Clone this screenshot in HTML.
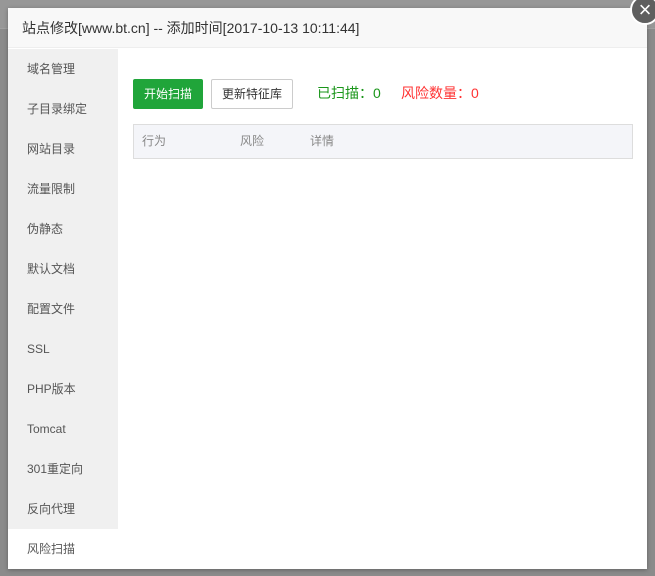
<!DOCTYPE html>
<html><head><meta charset="utf-8"><style>
*{margin:0;padding:0;box-sizing:border-box}
body{width:655px;height:576px;overflow:hidden;background:#8b8b8b;font-family:"Liberation Sans","Noto Sans CJK SC",sans-serif;position:relative}
.topbg{position:absolute;left:0;top:0;width:655px;height:29px;background:#979797;border-bottom:1px solid #a0a0a0}
.dlg{position:absolute;left:8px;top:8px;width:639px;height:561px;background:#fff;box-shadow:0 1px 4px rgba(0,0,0,.3)}
.hd{height:40px;background:#f8f8f8;border-bottom:1px solid #eee;font-size:14px;color:#333;line-height:40px;padding-left:14px}
.side{position:absolute;left:0;top:41px;width:110px;height:480px;background:#f0f0f0}
.side div,.act{height:40px;line-height:40px;padding-left:19px;font-size:12px;color:#555}
.act{position:absolute;left:0;top:521px;width:110px;background:#fff}
.main{position:absolute;left:125px;top:71px}
.b1{position:absolute;left:0;top:0;width:70px;height:30px;background:#20a53a;color:#fff;border-radius:2px;font-size:12px;line-height:30px;text-align:center}
.b2{position:absolute;left:78px;top:0;width:82px;height:30px;border:1px solid #ccc;border-radius:2px;color:#333;font-size:12px;line-height:28px;text-align:center}
.g{position:absolute;left:184px;top:0;line-height:28px;font-size:14px;color:#1a961a;white-space:nowrap}
.r{position:absolute;left:268px;top:0;line-height:28px;font-size:14px;color:#f33;white-space:nowrap}
.th{position:absolute;left:0;top:45px;width:500px;height:35px;background:#f4f5f9;border:1px solid #ddd;font-size:12px;color:#888;line-height:33px}
.th span{position:absolute;top:0}
.close{position:absolute;left:630px;top:-5px;width:30px;height:30px;border-radius:50%;background:#5f5f5f;border:2px solid #fff;color:#fff;text-align:center;line-height:25px;font-size:22px}
</style></head><body>
<div class="topbg"></div>
<div class="dlg">
<div class="hd">站点修改[www.bt.cn] -- 添加时间[2017-10-13 10:11:44]</div>
<div class="side"><div>域名管理</div><div>子目录绑定</div><div>网站目录</div><div>流量限制</div><div>伪静态</div><div>默认文档</div><div>配置文件</div><div>SSL</div><div>PHP版本</div><div>Tomcat</div><div>301重定向</div><div>反向代理</div></div>
<div class="act">风险扫描</div>
<div class="main">
<div class="b1">开始扫描</div><div class="b2">更新特征库</div>
<div class="g">已扫描：0</div><div class="r">风险数量：0</div>
<div class="th"><span style="left:8px">行为</span><span style="left:106px">风险</span><span style="left:176px">详情</span></div>
</div>
</div>
<div class="close">×</div>
</body></html>
